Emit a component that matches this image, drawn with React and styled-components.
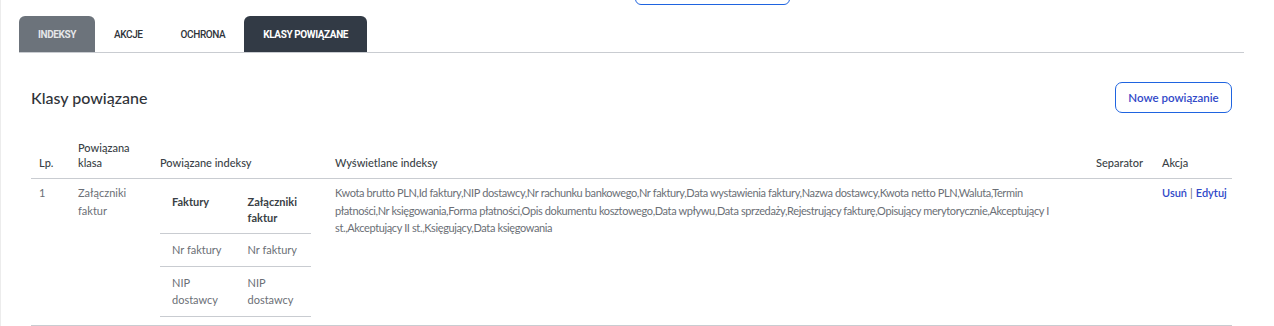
import React from 'react';
import styled, { createGlobalStyle } from 'styled-components';

const GlobalStyle = createGlobalStyle`
  body {
    margin: 0;
    background: #fff;
    font-family: Lato, "Noto Sans", sans-serif;
    color: #6b6f76;
  }
`;

const Page = styled.div`
  min-height: 326px;
  border-left: 1px solid #ececec;
  box-sizing: border-box;
`;

const TopStub = styled.div`
  height: 5px;
  overflow: hidden;
  display: flex;
  align-items: flex-end;
  padding-left: 634px;
`;

const StubButton = styled.div`
  width: 155px;
  height: 30px;
  flex-shrink: 0;
  border: 1px solid #1f64e0;
  border-radius: 6px;
  box-sizing: border-box;
`;

const Content = styled.div`
  padding: 11px 30px 0 18px;
`;

const Tabs = styled.div`
  display: flex;
  height: 36px;
  border-bottom: 1px solid #c9ccd1;
`;

const Tab = styled.div`
  display: flex;
  align-items: center;
  padding: 0 19px;
  border-radius: 6px 6px 0 0;
  font-family: Roboto, sans-serif;
  font-weight: ${p => (p.$variant ? 700 : 500)};
  font-size: 10px;
  letter-spacing: -0.4px;
  text-transform: uppercase;
  background: ${p => (p.$variant === 'dark' ? '#323a45' : p.$variant === 'gray' ? '#6c737b' : 'transparent')};
  color: ${p => (p.$variant === 'dark' ? '#fff' : p.$variant === 'gray' ? '#e4e6e9' : '#2f343a')};
`;

const Panel = styled.div`
  padding: 0 12px;
`;

const PanelHead = styled.div`
  display: flex;
  justify-content: space-between;
  align-items: center;
  margin-top: 29px;
  height: 31px;
`;

const Title = styled.h2`
  margin: 0;
  font-size: 16px;
  font-weight: 500;
  color: #2f3339;
`;

const OutlineButton = styled.button`
  width: 117px;
  height: 31px;
  border: 1px solid #1f64e0;
  border-radius: 7px;
  background: #fff;
  color: #2f48c8;
  font-family: Lato, sans-serif;
  font-size: 11.5px;
  font-weight: 600;
  cursor: pointer;
`;

const Table = styled.table`
  width: 100%;
  margin-top: 27px;
  border-collapse: collapse;
  table-layout: fixed;
  font-size: 11px;
`;

const Th = styled.th`
  text-align: left;
  vertical-align: bottom;
  font-weight: 500;
  color: #3a3f46;
  line-height: 15px;
  padding: 0 8px 8px 8px;
  border-bottom: 1px solid #c9ccd1;
`;

const Td = styled.td`
  vertical-align: top;
  line-height: 17.5px;
  padding: ${p => (p.$nested ? '7px' : '5px')} 8px 8px 8px;
  border-bottom: 1px solid #c9ccd1;
  color: #6b6f76;
`;

const IndexText = styled.div`
  padding-right: 18px;
  line-height: 17.5px;
  letter-spacing: -0.38px;
`;

const ActionLinks = styled.div`
  color: #2f48c8;
  font-weight: 600;
`;

const Sep = styled.span`
  color: #6b6f76;
  font-weight: 400;
  margin: 0 3px;
`;

const Inner = styled.table`
  width: 151px;
  border-collapse: collapse;
  table-layout: fixed;
  font-size: 11px;
`;

const InnerTh = styled.th`
  text-align: left;
  vertical-align: top;
  font-weight: 700;
  color: #3a3f46;
  line-height: 16px;
  padding: 8px 12px 7px 12px;
  border-bottom: 1px solid #c9ccd1;
`;

const InnerTd = styled.td`
  vertical-align: top;
  line-height: 17.5px;
  padding: 7px 12px 7px 12px;
  border-bottom: 1px solid #c9ccd1;
  color: #6b6f76;
`;

const indexes =
  'Kwota brutto PLN,Id faktury,NIP dostawcy,Nr rachunku bankowego,Nr faktury,Data wystawienia faktury,Nazwa dostawcy,Kwota netto PLN,Waluta,Termin płatności,Nr księgowania,Forma płatności,Opis dokumentu kosztowego,Data wpływu,Data sprzedaży,Rejestrujący fakturę,Opisujący merytorycznie,Akceptujący I st.,Akceptujący II st.,Księgujący,Data księgowania';

const pairs = [
  ['Nr faktury', 'Nr faktury'],
  ['NIP dostawcy', 'NIP dostawcy'],
];

export default function App() {
  return (
    <Page>
      <GlobalStyle />
      <TopStub>
        <StubButton />
      </TopStub>
      <Content>
        <Tabs>
          <Tab $variant="gray">Indeksy</Tab>
          <Tab>Akcje</Tab>
          <Tab>Ochrona</Tab>
          <Tab $variant="dark">Klasy powiązane</Tab>
        </Tabs>
        <Panel>
          <PanelHead>
            <Title>Klasy powiązane</Title>
            <OutlineButton>Nowe powiązanie</OutlineButton>
          </PanelHead>
          <Table>
            <colgroup>
              <col style={{ width: 39 }} />
              <col style={{ width: 82 }} />
              <col style={{ width: 175 }} />
              <col style={{ width: 761 }} />
              <col style={{ width: 66 }} />
              <col />
            </colgroup>
            <thead>
              <tr>
                <Th>Lp.</Th>
                <Th>Powiązana klasa</Th>
                <Th>Powiązane indeksy</Th>
                <Th>Wyświetlane indeksy</Th>
                <Th>Separator</Th>
                <Th>Akcja</Th>
              </tr>
            </thead>
            <tbody>
              <tr>
                <Td>1</Td>
                <Td>Załączniki faktur</Td>
                <Td $nested>
                  <Inner>
                    <thead>
                      <tr>
                        <InnerTh>Faktury</InnerTh>
                        <InnerTh>Załączniki faktur</InnerTh>
                      </tr>
                    </thead>
                    <tbody>
                      {pairs.map(([a, b]) => (
                        <tr key={a}>
                          <InnerTd>{a}</InnerTd>
                          <InnerTd>{b}</InnerTd>
                        </tr>
                      ))}
                    </tbody>
                  </Inner>
                </Td>
                <Td>
                  <IndexText>{indexes}</IndexText>
                </Td>
                <Td></Td>
                <Td>
                  <ActionLinks>
                    Usuń<Sep>|</Sep>Edytuj
                  </ActionLinks>
                </Td>
              </tr>
            </tbody>
          </Table>
        </Panel>
      </Content>
    </Page>
  );
}
